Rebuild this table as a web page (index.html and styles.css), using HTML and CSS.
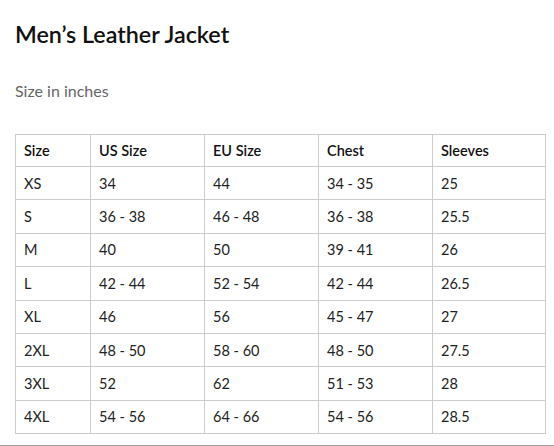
FILE: index.html
```html
<!DOCTYPE html>
<html lang="en">
<head>
<meta charset="utf-8">
<title>Men's Leather Jacket</title>
<link rel="stylesheet" href="styles.css">
</head>
<body>
<div class="page">
  <h1 class="title">Men’s Leather Jacket</h1>
  <p class="subtitle">Size in inches</p>
  <table class="chart">
    <colgroup>
      <col class="c1"><col class="c2"><col class="c3"><col class="c4"><col class="c5">
    </colgroup>
    <thead>
      <tr><th>Size</th><th>US Size</th><th>EU Size</th><th>Chest</th><th>Sleeves</th></tr>
    </thead>
    <tbody>
      <tr><td>XS</td><td>34</td><td>44</td><td>34 - 35</td><td>25</td></tr>
      <tr><td>S</td><td>36 - 38</td><td>46 - 48</td><td>36 - 38</td><td>25.5</td></tr>
      <tr><td>M</td><td>40</td><td>50</td><td>39 - 41</td><td>26</td></tr>
      <tr><td>L</td><td>42 - 44</td><td>52 - 54</td><td>42 - 44</td><td>26.5</td></tr>
      <tr><td>XL</td><td>46</td><td>56</td><td>45 - 47</td><td>27</td></tr>
      <tr><td>2XL</td><td>48 - 50</td><td>58 - 60</td><td>48 - 50</td><td>27.5</td></tr>
      <tr><td>3XL</td><td>52</td><td>62</td><td>51 - 53</td><td>28</td></tr>
      <tr><td>4XL</td><td>54 - 56</td><td>64 - 66</td><td>54 - 56</td><td>28.5</td></tr>
    </tbody>
  </table>
</div>
</body>
</html>
```
FILE: styles.css
```css
html, body {
  margin: 0;
  padding: 0;
  background: #fff;
}
body {
  font-family: "Lato", "Open Sans", sans-serif;
  color: #222;
}
.page {
  padding: 20px 10px 11px 15px;
  border-bottom: 1px solid #9a9a9a;
}
.title {
  margin: 0;
  font-size: 23.3px;
  line-height: 28px;
  font-weight: 600;
  color: #111;
}
.subtitle {
  margin: 33px 0 0;
  font-size: 16px;
  line-height: 20px;
  color: #666;
}
.chart {
  margin-top: 33px;
  width: 530px;
  border-collapse: collapse;
  table-layout: fixed;
  font-size: 14.5px;
}
.c1 { width: 75px; }
.c2 { width: 114px; }
.c3 { width: 114px; }
.c4 { width: 114px; }
.c5 { width: 113px; }
.chart th,
.chart td {
  border: 1px solid #cccccc;
  text-align: left;
  padding: 0 8px;
}
.chart th {
  height: 31px;
  font-weight: 600;
  color: #111;
}
.chart td {
  height: 32.4px;
  color: #222;
}
```
